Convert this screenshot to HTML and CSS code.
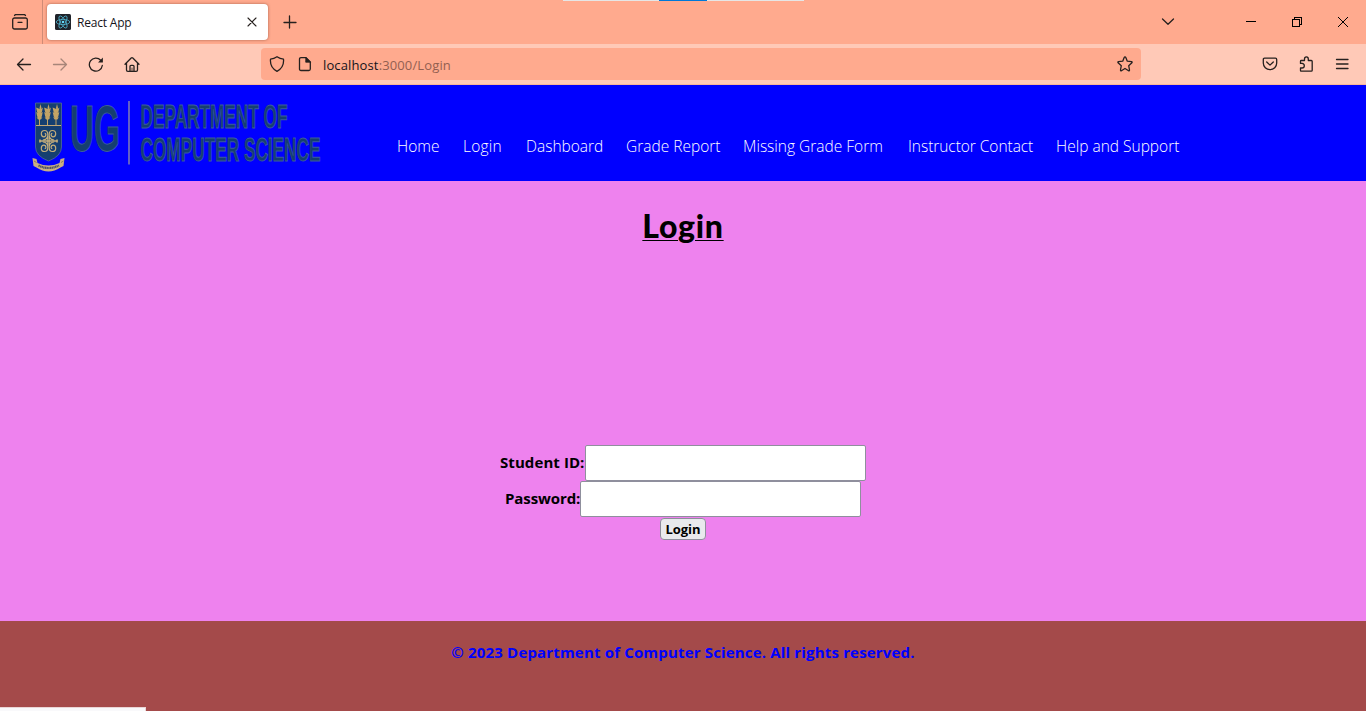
FILE: index.html
```html
<!DOCTYPE html>
<html lang="en">
<head>
<meta charset="utf-8">
<title>React App</title>
<link rel="stylesheet" href="styles.css">
</head>
<body>
<div class="tabbar">
  <div class="top-strip"><i></i></div>
  <div class="view-box"><svg class="icon" width="16" height="16" viewBox="0 0 16 16"><path d="M2.500 1.500Q3 .5 4 .5h8q1 0 1.500 1M2.500 4h11a1.800 1.800 0 0 1 1.800 1.800v7.400a1.800 1.800 0 0 1-1.800 1.800h-11a1.800 1.800 0 0 1-1.800-1.800V5.800A1.800 1.800 0 0 1 2.500 4zM6 8.300h4"/></svg></div>
  <div class="tab">
    <svg width="16" height="16" viewBox="0 0 16 16"><rect width="16" height="16" rx="1.500" fill="#20232a"/><g fill="none" stroke="#50b5d0" stroke-width=".8"><ellipse cx="8" cy="8" rx="6.800" ry="2.600"/><ellipse cx="8" cy="8" rx="6.800" ry="2.600" transform="rotate(60 8 8)"/><ellipse cx="8" cy="8" rx="6.800" ry="2.600" transform="rotate(120 8 8)"/></g><circle cx="8" cy="8" r="1.300" fill="#61dafb"/></svg>
    <span class="tab-title">React App</span>
    <svg class="icon close" width="10" height="10" viewBox="0 0 10 10"><path d="M1 1l8 8M9 1L1 9"/></svg>
  </div>
  <svg class="icon plus" width="12" height="12" viewBox="0 0 12 12"><path d="M5.500 0v12M0 6.500h12"/></svg>
  <div class="window-controls">
    <svg class="icon" width="14" height="10" viewBox="0 0 14 10"><path d="M1.500 2L7 7.300 12.500 2"/></svg>
    <svg class="icon crisp" width="10" height="10" viewBox="0 0 10 10"><path d="M0 4.500h10"/></svg>
    <svg class="icon crisp" width="10" height="10" viewBox="0 0 10 10"><path d="M.5 2.500h7v7h-7zM2.500 2.500v-2h7v7h-2"/></svg>
    <svg class="icon thin" width="10" height="10" viewBox="0 0 10 10"><path d="M0 0l10 10M10 0L0 10"/></svg>
  </div>
</div>
<div class="toolbar">
  <div class="nav-buttons">
    <svg class="icon" width="16" height="16" viewBox="0 0 16 16"><path d="M14.500 8.500H1.500M7 3L1.500 8.500 7 14"/></svg>
    <svg class="icon dim" width="16" height="16" viewBox="0 0 16 16"><path d="M1.500 8.500h13M9 3l5.500 5.500L9 14"/></svg>
    <svg class="icon" width="16" height="16" viewBox="0 0 16 16"><path d="M14.300 9.500A6.500 6.500 0 1 1 12.700 4.300"/><path d="M14.900 1.500v4.900H10z" fill="#26201e" stroke="none"/></svg>
    <svg class="icon" width="16" height="16" viewBox="0 0 16 16"><path d="M1 8.200L7.200 2q.8-.7 1.600 0L15 8.200M2.500 7v7q0 1.300 1.300 1.300h8.400q1.300 0 1.300-1.300V7M6 15v-4.700q0-1 1-1h2q1 0 1 1V15"/><path d="M8 12v3" stroke-width=".8"/></svg>
  </div>
  <div class="urlbar">
    <svg class="icon" width="16" height="16" viewBox="0 0 16 16"><path d="M8 .7q3 2.100 6.500 2.500Q15.300 11.500 8 15.300.7 11.500 1.500 3.200 5 2.800 8 .7z"/></svg>
    <svg class="icon file" width="14" height="16" viewBox="0 0 14 16"><path d="M3 1.700h5L12.300 6v7q0 1.500-1.500 1.500H3q-1.500 0-1.500-1.500V3.200Q1.500 1.700 3 1.700z"/><path d="M8 1.500l4.500 4.700H8z" fill="#26201e" stroke-width=".8"/></svg>
    <span class="url">localhost<span class="path">:3000/Login</span></span>
    <svg class="icon star" width="16" height="16" viewBox="0 0 16 16"><path d="M8 .9q.5 0 .8.700l1.500 3.600 4.200.4q1 .3.400 1.200l-3.200 2.900.8 4.300q0 1-.9.800L8 12.500l-3.600 2.300q-.9.200-.9-.8l.8-4.300L1.100 6.800q-.6-.9.400-1.200l4.200-.4 1.500-3.600Q7.500.9 8 .9z"/></svg>
  </div>
  <div class="tools">
    <svg class="icon" width="16" height="16" viewBox="0 0 16 16"><path d="M2.600 2.200h10.800q1.300 0 1.300 1.300V7A6.700 6.700 0 0 1 1.300 7V3.500q0-1.300 1.300-1.300zM4.700 6L8 9.100 11.300 6"/></svg>
    <svg class="icon" width="16" height="16" viewBox="0 0 16 16"><path d="M2.500 7.400V5.300q0-.8.800-.8h3.200V3q0-2.200 1.900-2.200T10.300 3v1.500h3q.9 0 .9.900v8.900q0 .9-.9.900H3.300q-.8 0-.8-.8v-2.400H4q2.300 0 2.300-2.200T4 7.400z"/></svg>
    <svg class="icon" width="16" height="16" viewBox="0 0 16 16"><path d="M2.500 3.500h11.500M2.500 8h11.500M2.500 12.500h11.500"/></svg>
  </div>
</div>
<header class="site-header">
  <svg class="logo" width="310" height="96" viewBox="0 0 310 96">
    <path d="M15.500 18h26v44q0 9-13 14-13-5-13-14z" fill="#153f70" stroke="#526b96" stroke-width=".8"/>
    <path d="M16 40.500h25" stroke="#c3a775" stroke-width="1"/>
    <g fill="#c3a465">
      <path id="tree" d="M20.500 19l1 4-.3 1 1.700-1.500-1 4.500-.9 1 1.800-1-1 4.500-.9 1 1.500-.3-1.500 2.300h-.9V40h-1v-5.500h-.9l-1.500-2.300 1.500.3-.9-1-1-4.500 1.800 1-.9-1-1-4.500L19.800 24l-.3-1z"/>
      <use href="#tree" x="8"/><use href="#tree" x="16.500"/>
    </g>
    <g fill="none" stroke="#c3ad7b" stroke-width="1.200">
      <path d="M20.500 56h16M20 54.500v3M37 54.500v3" stroke-width="1.700"/>
      <path id="curl" d="M27.800 56V49.500q0-4-3.200-4-3.300 0-3.300 3.300 0 3 2.600 3 2 0 2-2.200 0-1.200-1.200-1.200M27.800 51q-1 4-5 4"/>
      <use href="#curl" transform="matrix(-1 0 0 1 57 0)"/>
      <use href="#curl" transform="matrix(1 0 0 -1 0 112)"/>
      <use href="#curl" transform="matrix(-1 0 0 -1 57 112)"/>
    </g>
    <path d="M12.500 73l4 1 1 4q11 5 22 0l1-4 4-1-1 8-3 1.500q-12 8-24 0L13.500 81z" fill="#c9ae82"/>
    <path d="M18.500 80.500q10 5 20.500 0" fill="none" stroke="#4c5266" stroke-width="2.200" stroke-dasharray="1.300 .4"/>
    <path d="M14 76l2.500 1.500M43.500 76L41 77.500" stroke="#8a795f"/>
    <g class="logo-text">
      <text class="ug" transform="translate(50 65.500) scale(1 1.910)" textLength="50" lengthAdjust="spacingAndGlyphs">UG</text>
      <text transform="translate(120.500 43) scale(1 1.800)" textLength="147" lengthAdjust="spacingAndGlyphs">DEPARTMENT OF</text>
      <text transform="translate(120.500 76) scale(1 1.800)" textLength="180" lengthAdjust="spacingAndGlyphs">COMPUTER SCIENCE</text>
    </g>
    <path d="M109 16v63.500" stroke="#8d89ae" stroke-width="1.400"/>
  </svg>
  <nav class="menu">
    <a class="m-home">Home</a><a class="m-login">Login</a><a class="m-dash">Dashboard</a><a class="m-grade">Grade Report</a><a class="m-missing">Missing Grade Form</a><a class="m-contact">Instructor Contact</a><a class="m-help">Help and Support</a>
  </nav>
</header>
<main class="content">
  <h1 class="title">Login</h1>
  <form class="form">
    <div class="row"><label class="label-id" for="sid">Student ID:</label><input class="field" id="sid" type="text"></div>
    <div class="row"><label class="label-pw" for="pw">Password:</label><input class="field" id="pw" type="password"></div>
    <button class="submit" type="button">Login</button>
  </form>
</main>
<footer class="footer">
  <p class="copyright">© 2023 Department of Computer Science. All rights reserved.</p>
  <div class="status"></div>
</footer>
</body>
</html>
```
FILE: styles.css
```css
* { box-sizing: border-box; }
body { margin: 0; height: 711px; overflow: hidden; display: flex; flex-direction: column; font-family: "Open Sans", "Noto Sans", sans-serif; }
svg { display: block; flex: none; }
.icon { fill: none; stroke: #26201e; stroke-width: 1.3; stroke-linecap: round; stroke-linejoin: round; }
.crisp { stroke-width: 1; stroke: #000; shape-rendering: crispEdges; }
.thin { stroke-width: 1; stroke: #000; }
.dim { opacity: .4; }

.tabbar { position: relative; height: 44px; flex: none; display: flex; align-items: center; background: #ffaa8e; }
.top-strip { position: absolute; top: 0; left: 563px; width: 241px; height: 1px; background: #e6e6e6; }
.top-strip i { display: block; width: 48px; height: 1px; margin-left: 96px; background: #0078d7; }
.view-box { width: 43px; height: 44px; padding: 14px 0 0 12px; border-right: 1px solid #cf8b76; }
.tab { width: 221px; height: 36px; margin-left: 4px; padding: 0 11px 0 8px; display: flex; align-items: center; background: #fff; border-radius: 4px; box-shadow: 0 0 3px rgba(80, 20, 0, .5); }
.tab-title { margin: 2px 0 0 6px; font: 12px/16px "Open Sans", sans-serif; letter-spacing: -.2px; color: #15141a; }
.close { margin-left: auto; stroke-width: 1.1; }
.plus { margin-left: 16px; overflow: visible; }
.window-controls { margin-left: auto; padding-right: 18px; display: flex; align-items: center; }
.window-controls svg + svg { margin-left: 36px; }
.window-controls svg:nth-child(2) { margin-left: 71px; }

.toolbar { height: 41px; flex: none; display: flex; padding-top: 4px; background: #ffc9b7; border-bottom: 1px solid #f7b59b; }
.nav-buttons { width: 261px; height: 32px; padding-left: 16px; display: flex; align-items: center; gap: 20px; }
.urlbar { width: 880px; height: 32px; padding: 0 8px; display: flex; align-items: center; background: #ffaa8e; border-radius: 4px; }
.file { margin-left: 13px; }
.url { margin: 2px 0 0 11px; font-size: 13px; line-height: 18px; letter-spacing: .13px; color: #15141a; }
.path { color: #935f51; }
.star { margin-left: auto; }
.tools { margin-left: auto; height: 32px; padding-right: 16px; display: flex; align-items: center; gap: 20px; }

.site-header { height: 96px; flex: none; display: flex; padding-left: 20px; background: #00f; }
.logo-text { font: 700 18.5px "Liberation Sans", Arial, sans-serif; fill: #153f70; stroke: #3c5c9a; stroke-width: .5; }
.ug { font-size: 34px; }
.menu { margin: 49px 0 0 67px; display: flex; gap: 24px; font-weight: 300; font-size: 15.500px; line-height: 24px; color: #fff; white-space: nowrap; }
.m-home { width: 42px; }
.m-login { width: 39px; letter-spacing: .2px; }
.m-dash { width: 76px; }
.m-grade { width: 93px; }
.m-missing { width: 141px; }
.m-contact { width: 124px; letter-spacing: -.05px; }
.m-help { width: 123px; }

.content { height: 440px; flex: none; display: flex; flex-direction: column; align-items: center; background: #ee82ee; }
.title { margin: 21px 0 0; height: 48px; font: 900 32px/48px Lato, sans-serif; letter-spacing: .7px; text-decoration: underline; text-decoration-thickness: 1px; text-underline-offset: 2px; }
.form { margin-top: 195px; display: flex; flex-direction: column; align-items: center; }
.row { height: 36px; display: flex; align-items: center; font-weight: 700; font-size: 15px; white-space: nowrap; }
.row label { padding-bottom: 2px; }
.label-id { width: 85px; letter-spacing: .08px; }
.label-pw { width: 75px; letter-spacing: -.1px; }
.field { width: 281px; height: 36px; margin: 0; border: 1px solid #8f8f9d; border-radius: 2px; background: #fff; }
.submit { width: 46px; height: 22px; margin-top: 1px; padding: 0; font: 700 13px/18px "Open Sans", sans-serif; color: #000; background: #e9e9ed; border: 1px solid #8f8f9d; border-radius: 4px; }

.footer { position: relative; flex: 1; background: #a44a4a; }
.copyright { margin: 19px 0 0; text-align: center; font-weight: 700; font-size: 15px; line-height: 24px; letter-spacing: .17px; color: #00f; white-space: nowrap; }
.status { position: absolute; left: 0; bottom: 0; width: 146px; height: 4px; background: #f9f9fb; border: solid #ead6d6; border-width: 1px 1px 0 0; }
```
